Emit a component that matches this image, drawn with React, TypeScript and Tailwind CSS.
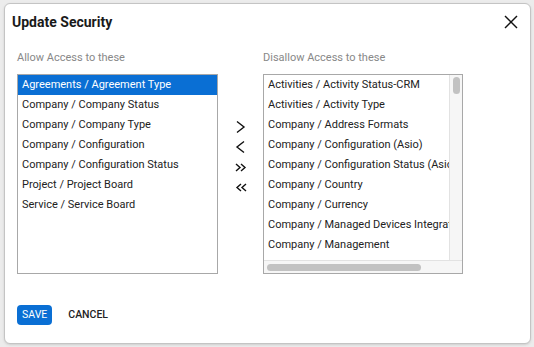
import React from 'react';

const allowed = [
  'Agreements / Agreement Type',
  'Company / Company Status',
  'Company / Company Type',
  'Company / Configuration',
  'Company / Configuration Status',
  'Project / Project Board',
  'Service / Service Board',
];

const disallowed = [
  'Activities / Activity Status-CRM',
  'Activities / Activity Type',
  'Company / Address Formats',
  'Company / Configuration (Asio)',
  'Company / Configuration Status (Asio)',
  'Company / Country',
  'Company / Currency',
  'Company / Managed Devices Integration',
  'Company / Management',
];

function Chevron({ dir, double }: { dir: 'right' | 'left'; double?: boolean }) {
  return (
    <svg width="14" height="14" viewBox="0 0 14 14" fill="none" stroke="#111" strokeWidth="1.4">
      {double ? (
        dir === 'right' ? (
          <>
            <polyline points="2,4 6,7.5 2,11" />
            <polyline points="7,4 11,7.5 7,11" />
          </>
        ) : (
          <>
            <polyline points="7,4 3,7.5 7,11" />
            <polyline points="12,4 8,7.5 12,11" />
          </>
        )
      ) : dir === 'right' ? (
        <polyline points="3,1.5 10,7 3,12.5" />
      ) : (
        <polyline points="10,1.5 3,7 10,12.5" />
      )}
    </svg>
  );
}

export default function App() {
  return (
    <div
      className="w-[534px] h-[347px] bg-[#ececec] pt-[3px] pl-[4px]"
      style={{ fontFamily: 'Roboto, "Liberation Sans", sans-serif' }}
    >
      <div className="w-[527px] h-[341px] bg-white rounded-[6px] border border-[#c4c4c4] shadow-sm flex flex-col">
        <div className="flex items-center justify-between pl-[7px] pr-[12px] h-[36px]">
          <h1 className="text-[14px] font-bold text-[#1a1a1a]">Update Security</h1>
          <svg width="14" height="14" viewBox="0 0 14 14" stroke="#111" strokeWidth="1.4">
            <line x1="1" y1="1" x2="13" y2="13" />
            <line x1="13" y1="1" x2="1" y2="13" />
          </svg>
        </div>

        <div className="flex pl-[12px] mt-[9px]">
          <div className="flex flex-col">
            <div className="text-[11px] text-[#888] h-[17px] leading-[17px]">Allow Access to these</div>
            <div className="mt-[8px] w-[201px] h-[200px] border border-[#a8a8a8] flex flex-col">
              {allowed.map((item, i) => (
                <div
                  key={item}
                  className={`h-[20px] leading-[20px] px-[4px] text-[11px] whitespace-nowrap ${
                    i === 0 ? 'bg-[#0a6fd4] text-white' : 'text-[#222]'
                  }`}
                >
                  {item}
                </div>
              ))}
            </div>
          </div>

          <div className="w-[45px] flex flex-col items-center pt-[71px] gap-[6px]">
            <Chevron dir="right" />
            <Chevron dir="left" />
            <Chevron dir="right" double />
            <Chevron dir="left" double />
          </div>

          <div className="flex flex-col">
            <div className="text-[11px] text-[#888] h-[17px] leading-[17px]">Disallow Access to these</div>
            <div className="mt-[8px] w-[200px] h-[200px] border border-[#a8a8a8] flex flex-col">
              <div className="flex flex-1 min-h-0">
                <div className="flex-1 overflow-hidden">
                  {disallowed.map((item) => (
                    <div key={item} className="h-[20px] leading-[20px] px-[4px] text-[11px] text-[#222] whitespace-nowrap">
                      {item}
                    </div>
                  ))}
                </div>
                <div className="w-[13px] bg-[#f6f6f6] border-l border-[#e2e2e2] pt-[2px] flex justify-center">
                  <div className="w-[7px] h-[17px] rounded-full bg-[#c2c2c2]" />
                </div>
              </div>
              <div className="h-[13px] bg-[#f6f6f6] border-t border-[#e2e2e2] flex items-center pl-[3px] pr-[13px]">
                <div className="w-[154px] h-[7px] rounded-full bg-[#c2c2c2]" />
              </div>
            </div>
          </div>
        </div>

        <div className="flex items-center pl-[12px] mt-[31px] gap-[16px]">
          <button className="h-[20px] px-[5px] rounded-[4px] bg-[#0a6fd4] text-white text-[10.5px]">SAVE</button>
          <button className="text-[10.5px] font-medium text-[#222]">CANCEL</button>
        </div>
      </div>
    </div>
  );
}
